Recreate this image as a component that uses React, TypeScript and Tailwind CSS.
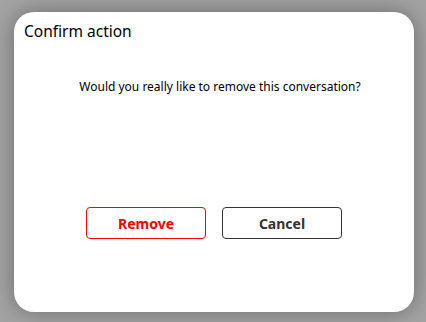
export default function App() {
  return (
    <div className="flex h-[322px] w-[426px] items-start bg-[#a3a3a3] pl-[14px] pt-[12px] font-['Noto_Sans',sans-serif]">
      <div className="flex h-[300px] w-[400px] flex-col rounded-[20px] bg-white shadow-[0_0_22px_rgba(0,0,0,0.35)]">
        <h2 className="px-[10px] pt-[9px] text-[15.5px] leading-[20px] text-black">Confirm action</h2>
        <p className="mt-[38px] pl-[12px] text-center text-[12px] leading-[16px] text-black">
          Would you really like to remove this conversation?
        </p>
        <div className="mt-[112px] flex justify-center gap-4">
          <button className="h-[32px] w-[120px] rounded-[4px] border border-[#ff0000] bg-white text-[14px] font-bold text-[#ff0000]">
            Remove
          </button>
          <button className="h-[32px] w-[120px] rounded-[4px] border border-[#333333] bg-white text-[14px] font-bold text-[#333333]">
            Cancel
          </button>
        </div>
      </div>
    </div>
  );
}
